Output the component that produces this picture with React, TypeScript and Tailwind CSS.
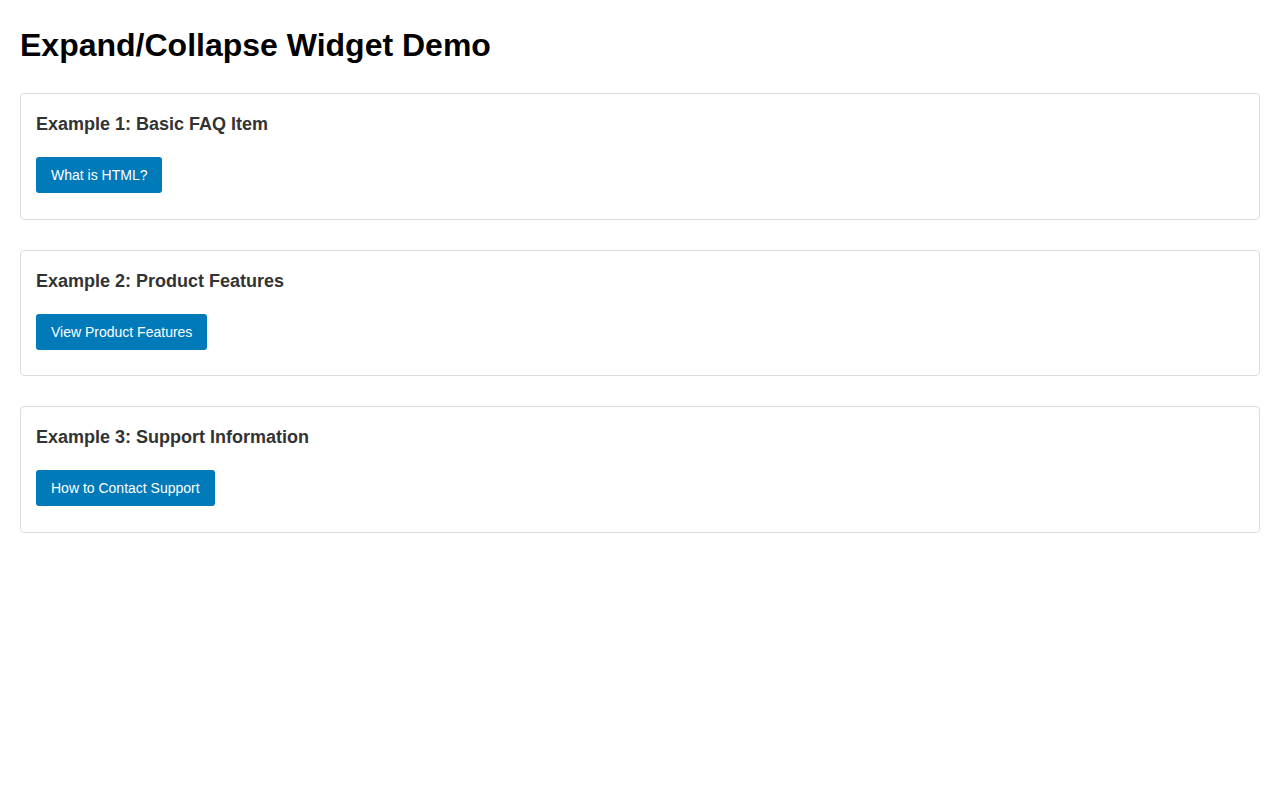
import React from "react";

const examples = [
  { title: "Example 1: Basic FAQ Item", button: "What is HTML?" },
  { title: "Example 2: Product Features", button: "View Product Features" },
  { title: "Example 3: Support Information", button: "How to Contact Support" },
];

export default function App() {
  return (
    <div className="min-h-screen bg-white px-5 pt-[27px] font-['Liberation_Sans',Arial,sans-serif] text-black">
      <h1 className="text-[32px] font-bold leading-[37px]">Expand/Collapse Widget Demo</h1>

      <div className="mt-[29px] flex flex-col gap-[30px]">
        {examples.map((ex) => (
          <section key={ex.title} className="rounded-[4px] border border-[#dddddd] px-[15px] pb-[25.5px] pt-[20px]">
            <h3 className="text-[18px] font-bold leading-[21px] text-[#333333]">{ex.title}</h3>
            <button className="mt-[22px] rounded-[3px] bg-[#007ab8] px-[15px] py-[10px] text-[14px] leading-[16px] text-white">
              {ex.button}
            </button>
          </section>
        ))}
      </div>
    </div>
  );
}
